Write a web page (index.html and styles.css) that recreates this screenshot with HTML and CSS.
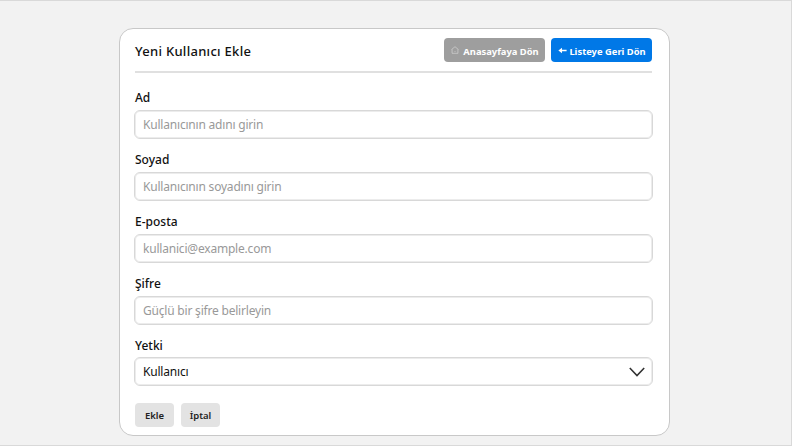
FILE: index.html
```html
<!DOCTYPE html>
<html lang="tr">
<head>
<meta charset="utf-8">
<title>Yeni Kullanıcı Ekle</title>
<link rel="stylesheet" href="styles.css">
</head>
<body>
<main class="card">
  <header class="head">
    <h1>Yeni Kullanıcı Ekle</h1>
    <nav class="links">
      <a class="btn gray"><svg class="home" viewBox="0 0 9 9"><path d="M.6 4 4.5.8 8.4 4M1.2 3.7v4.5h6.6V3.7M4 6.2h1"/></svg><span>Anasayfaya Dön</span></a>
      <a class="btn blue"><svg class="arrow" viewBox="0 0 9 7"><path d="M8.6 3.5H3"/><path class="tip" d="M.4 3.5 4 .8v5.4z"/></svg><span>Listeye Geri Dön</span></a>
    </nav>
  </header>
  <form>
    <label>Ad</label><input type="text" placeholder="Kullanıcının adını girin">
    <label>Soyad</label><input type="text" placeholder="Kullanıcının soyadını girin">
    <label>E-posta</label><input type="text" placeholder="kullanici@example.com">
    <label>Şifre</label><input type="password" placeholder="Güçlü bir şifre belirleyin">
    <label>Yetki</label>
    <div class="select"><span>Kullanıcı</span><svg class="chev" viewBox="0 0 16 10"><path d="M.8 1 8 8.5 15.2 1"/></svg></div>
    <div class="actions"><button type="button">Ekle</button><button type="button">İptal</button></div>
  </form>
</main>
</body>
</html>
```
FILE: styles.css
```css
* { box-sizing: border-box; }
body { margin: 0; height: 446px; overflow: hidden; padding-top: 27px; background: #f2f2f2; border: solid #d9d9d9; border-width: 1px 1px 1px 0; font-family: "Noto Sans", sans-serif; color: #111; }
.card { width: 551px; height: 408px; margin-left: 119px; padding: 9px 16px 0 15px; background: #fff; border: 1px solid #c8c8c8; border-radius: 14px; }
.head { display: flex; justify-content: space-between; height: 35px; margin-right: 1px; border-bottom: 2px solid #e0e0e0; }
h1 { margin: 0; font-size: 13px; font-weight: 500; line-height: 26px; letter-spacing: .29px; }
.links { display: flex; gap: 6px; }
.btn { display: flex; align-items: center; justify-content: center; gap: 4px; width: 101px; height: 24px; border-radius: 4px; color: #fff; font-size: 9.4px; font-weight: 700; white-space: nowrap; padding: 2px 0 0 1px; }
.gray { background: #9e9e9e; }
.blue { background: #0078e7; gap: 2px; }
svg { fill: none; stroke: currentColor; flex: none; }
.home { width: 8px; height: 8px; stroke: #d4d4d4; stroke-width: .8; margin-top: -2px; }
.arrow { width: 9px; height: 7px; stroke-width: 1.5; margin-top: -2px; }
.tip { fill: #fff; stroke: none; }
form { display: block; padding-top: 16px; }
label { display: block; height: 20.9px; line-height: 18px; font-size: 12px; font-weight: 500; }
input, .select { display: flex; align-items: center; justify-content: space-between; width: 519px; height: 29px; margin: 0 0 12px -1px; padding: 0 7px 0 8px; border: 1px solid #d8d8d8; border-radius: 6px; box-shadow: inset 0 0 0 1px #ececec; background: #fff; font: 12px "Noto Sans", sans-serif; letter-spacing: -.2px; }
input { padding-top: 1px; }
input::placeholder { color: #999; }
.chev { width: 16px; height: 10px; stroke: #333; stroke-width: 1.6; }
.actions { display: flex; gap: 7px; padding-top: 5px; }
button { height: 24px; width: 39px; padding: 1px 0 0; border: 0; border-radius: 4px; background: #e3e3e3; color: #222; font: 600 9.5px "Noto Sans", sans-serif; }
```
